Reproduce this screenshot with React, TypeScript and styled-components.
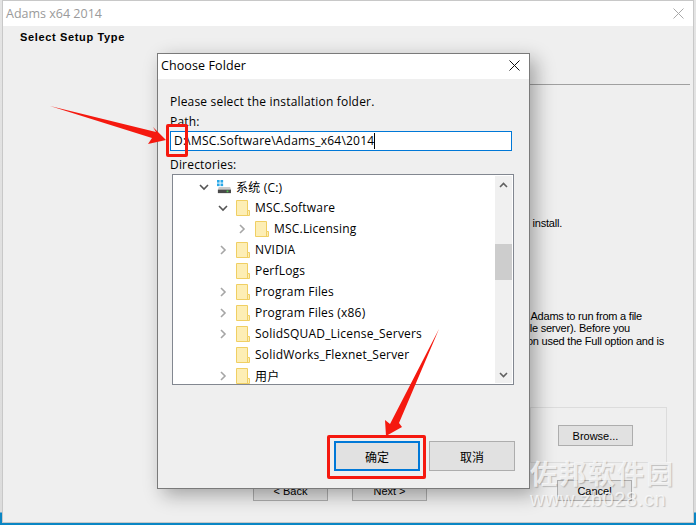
import React from "react";
import styled, { createGlobalStyle } from "styled-components";

const Global = createGlobalStyle`
  html, body { margin: 0; padding: 0; background: #fff; overflow: hidden; }
  #root { width: 696px; height: 525px; }
`;

const UI = `"Open Sans", "Noto Sans CJK SC", sans-serif`;
const Old = `"Liberation Sans", sans-serif`;

const Desktop = styled.div`
  position: relative;
  width: 696px;
  height: 525px;
  box-sizing: border-box;
  padding: 1px 3px 3px 3px;
  background: linear-gradient(#e4e4e4 0, #dcdcdc 512px, #0a86c4 513px);
  overflow: hidden;
`;
const Installer = styled.div`
  height: 521px;
  box-sizing: border-box;
  background: #efefef;
  display: flex;
  flex-direction: column;
  box-shadow: 0 0 0 1px #c8c8c8;
`;
const InstallerTitle = styled.div`
  height: 25px;
  flex: none;
  background: #fff;
  display: flex;
  align-items: center;
  justify-content: space-between;
  padding: 0 9px 0 3px;
  font: 12.5px ${UI};
  color: #9a9a9a;
`;
const Head = styled.div`
  height: 59px;
  flex: none;
  box-sizing: border-box;
  padding: 5px 0 0 17px;
  font: bold 11px ${Old};
  letter-spacing: 0.65px;
  color: #000;
  display: flex;
  flex-direction: column;
  justify-content: space-between;
`;
const HeadRule = styled.div`
  height: 1px;
  background: #a0a0a0;
  margin: 0 3px 0 500px;
`;
const Body = styled.div`
  flex: 1;
  position: relative;
  display: flex;
  flex-direction: column;
  font: 11px/12.5px ${Old};
  color: #000;
`;
const Copy = styled.div<{ $top: number }>`
  margin-top: ${(p) => p.$top}px;
  flex: none;
  letter-spacing: -0.22px;
`;
const CopyLine = styled.div<{ $end: number }>`
  width: ${(p) => p.$end}px;
  display: flex;
  justify-content: flex-end;
  white-space: nowrap;
`;
const GroupBox = styled.div`
  margin: 60px 0 0 527px;
  width: 137px;
  height: 56px;
  box-sizing: border-box;
  border: 1px solid #dcdcdc;
  padding: 17px 0 0 27px;
  flex: none;
`;
const OldButton = styled.button`
  width: 75px;
  height: 21px;
  box-sizing: border-box;
  border: 1px solid #adadad;
  background: #e1e1e1;
  padding: 0;
  font: 11px ${Old};
  color: #000;
`;
const Footer = styled.div`
  display: flex;
  margin: 17px 0 0 250px;
  gap: 24px;
  flex: none;
`;
const CancelSlot = styled.div`
  margin-left: 106px;
`;

const Dialog = styled.div`
  position: absolute;
  left: 157px;
  top: 53px;
  width: 373px;
  height: 436px;
  box-sizing: border-box;
  border: 1px solid #7a7a7a;
  background: #efefef;
  box-shadow: 6px 6px 18px rgba(0, 0, 0, 0.32);
  display: flex;
  flex-direction: column;
  font: 12px ${UI};
  color: #000;
`;
const DialogTitle = styled.div`
  height: 25px;
  flex: none;
  background: #fff;
  display: flex;
  align-items: center;
  justify-content: space-between;
  padding: 0 9px 2px 3px;
  box-sizing: border-box;
  font-size: 12.5px;
  letter-spacing: 0.1px;
`;
const DialogBody = styled.div`
  flex: 1;
  display: flex;
  flex-direction: column;
  padding: 14px 18px 0 12px;
`;
const Label = styled.div<{ $top?: number }>`
  height: 17px;
  line-height: 17px;
  margin-top: ${(p) => p.$top ?? 0}px;
  letter-spacing: 0.19px;
  white-space: nowrap;
`;
const PathInput = styled.div`
  height: 20px;
  width: 342px;
  margin-top: 1px;
  box-sizing: border-box;
  border: 1px solid #0078d7;
  background: #fff;
  padding-left: 3px;
  display: flex;
  align-items: center;
  line-height: 18px;
  letter-spacing: 0.21px;
  white-space: nowrap;
`;
const Caret = styled.span`
  width: 1px;
  height: 16px;
  background: #000;
`;
const Tree = styled.div`
  margin: 1px 0 0 2px;
  width: 342px;
  height: 211px;
  box-sizing: border-box;
  border: 1px solid #828790;
  background: #fff;
  display: flex;
  overflow: hidden;
`;
const TreeList = styled.div`
  flex: 1;
  padding-top: 1px;
  overflow: hidden;
`;
const Row = styled.div<{ $depth: number }>`
  height: 21px;
  display: flex;
  align-items: center;
  padding-left: ${(p) => 24 + p.$depth * 19}px;
  letter-spacing: 0.2px;
  white-space: nowrap;
`;
const Twisty = styled.span`
  width: 14px;
  height: 14px;
  flex: none;
  margin-right: 6px;
  display: flex;
  align-items: center;
  justify-content: center;
`;
const IconSlot = styled.span`
  width: 14px;
  height: 16px;
  flex: none;
  margin-right: 5px;
  display: flex;
`;
const Scrollbar = styled.div`
  width: 17px;
  flex: none;
  background: #f0f0f0;
  display: flex;
  flex-direction: column;
  margin: 1px 1px 1px 0;
  align-items: stretch;
`;
const ScrollCap = styled.div`
  height: 17px;
  display: flex;
  align-items: center;
  justify-content: center;
  flex: none;
`;
const ScrollTrack = styled.div`
  flex: 1;
  padding-top: 51px;
`;
const Thumb = styled.div`
  height: 36px;
  background: #cdcdcd;
`;
const DialogFooter = styled.div`
  display: flex;
  justify-content: flex-end;
  gap: 9px;
  margin: 56px -4px 0 0;
`;
const DialogButton = styled.button<{ $primary?: boolean }>`
  width: 86px;
  height: 30px;
  box-sizing: border-box;
  border: ${(p) => (p.$primary ? "2px solid #0078d7" : "1px solid #adadad")};
  background: #e1e1e1;
  padding: 0;
  font: 12px "Noto Sans CJK SC", sans-serif;
  color: #000;
`;
const RedFrame = styled.div<{ $x: number; $y: number; $w: number; $h: number }>`
  position: absolute;
  left: ${(p) => p.$x}px;
  top: ${(p) => p.$y}px;
  width: ${(p) => p.$w}px;
  height: ${(p) => p.$h}px;
  box-sizing: border-box;
  border: 3px solid #f5190f;
  border-radius: 2px;
`;
const ArrowLayer = styled.svg`
  position: absolute;
  left: 0;
  top: 0;
  width: 696px;
  height: 525px;
  pointer-events: none;
`;
const Watermark = styled.div`
  position: absolute;
  left: 530px;
  top: 458px;
  width: 146px;
  color: rgba(250, 250, 250, 0.8);
  text-shadow: 1px 1px 1px rgba(0, 0, 0, 0.2);
  pointer-events: none;
`;
const WatermarkCn = styled.div`
  font: 700 27px/30px "Noto Sans CJK SC", sans-serif;
  letter-spacing: 2px;
  white-space: nowrap;
`;
const WatermarkEn = styled.div`
  font: 20px/20px ${Old};
  letter-spacing: 0.6px;
  white-space: nowrap;
  margin-top: 1px;
`;

const CloseIcon = ({ color }: { color: string }) => (
  <svg width="11" height="11" viewBox="0 0 11 11">
    <path d="M0.5 0.5L10.5 10.5M10.5 0.5L0.5 10.5" stroke={color} strokeWidth="1" fill="none" />
  </svg>
);
const Folder = () => (
  <svg width="14" height="16" viewBox="0 0 14 16">
    <path d="M0.5 0.5H11.5V10.5H13.5V15.5H0.5Z" fill="#fdeeb5" stroke="#f0cf63" />
    <path d="M11.5 10.5V15" stroke="#f0cf63" />
  </svg>
);
const Drive = () => (
  <svg width="16" height="16" viewBox="0 0 16 16">
    <rect x="0" y="0" width="3" height="3" fill="#29a8e8" />
    <rect x="4" y="0" width="3" height="3" fill="#29a8e8" />
    <rect x="0" y="4" width="3" height="3" fill="#29a8e8" />
    <rect x="4" y="4" width="3" height="3" fill="#29a8e8" />
    <path d="M2 8H15L16 11H1Z" fill="#c9c9c9" />
    <rect x="1" y="11" width="15" height="4" fill="#4a4a4a" />
    <rect x="11" y="12" width="2" height="2" fill="#4ec94e" />
  </svg>
);
const Chevron = ({ open }: { open?: boolean }) => (
  <svg width="10" height="10" viewBox="0 0 10 10">
    <path
      d={open ? "M1 3L5 7L9 3" : "M3 1L7 5L3 9"}
      stroke={open ? "#555" : "#a6a6a6"}
      strokeWidth="1.6"
      fill="none"
    />
  </svg>
);

type Item = { name: string; depth: number; state?: "open" | "closed"; drive?: boolean };
const items: Item[] = [
  { name: "系统 (C:)", depth: 0, state: "open", drive: true },
  { name: "MSC.Software", depth: 1, state: "open" },
  { name: "MSC.Licensing", depth: 2, state: "closed" },
  { name: "NVIDIA", depth: 1, state: "closed" },
  { name: "PerfLogs", depth: 1 },
  { name: "Program Files", depth: 1, state: "closed" },
  { name: "Program Files (x86)", depth: 1, state: "closed" },
  { name: "SolidSQUAD_License_Servers", depth: 1, state: "closed" },
  { name: "SolidWorks_Flexnet_Server", depth: 1 },
  { name: "用户", depth: 1, state: "closed" },
];

export default function App() {
  return (
    <Desktop>
      <Global />
      <Installer>
        <InstallerTitle>
          <span>Adams x64 2014</span>
          <CloseIcon color="#a8a8a8" />
        </InstallerTitle>
        <Head>
          <span>Select Setup Type</span>
          <HeadRule />
        </Head>
        <Body>
          <Copy $top={132}>
            <CopyLine $end={559}>Select the type of setup you prefer to install.</CopyLine>
          </Copy>
          <Copy $top={80}>
            <CopyLine $end={639}>The Run From Network option allows Adams to run from a file</CopyLine>
            <CopyLine $end={627}>server (without being installed on the file server). Before you</CopyLine>
            <CopyLine $end={661}>use this, an administrator on this station used the Full option and is</CopyLine>
          </Copy>
          <GroupBox>
            <OldButton>Browse...</OldButton>
          </GroupBox>
          <Footer>
            <OldButton>&lt; Back</OldButton>
            <OldButton>Next &gt;</OldButton>
            <CancelSlot>
              <OldButton>Cancel</OldButton>
            </CancelSlot>
          </Footer>
        </Body>
      </Installer>

      <Dialog>
        <DialogTitle>
          <span>Choose Folder</span>
          <CloseIcon color="#111" />
        </DialogTitle>
        <DialogBody>
          <Label>Please select the installation folder.</Label>
          <Label $top={3}>Path:</Label>
          <PathInput>
            D:\MSC.Software\Adams_x64\2014
            <Caret />
          </PathInput>
          <Label $top={5}>Directories:</Label>
          <Tree>
            <TreeList>
              {items.map((it) => (
                <Row key={it.name} $depth={it.depth}>
                  <Twisty>{it.state && <Chevron open={it.state === "open"} />}</Twisty>
                  <IconSlot>{it.drive ? <Drive /> : <Folder />}</IconSlot>
                  {it.name}
                </Row>
              ))}
            </TreeList>
            <Scrollbar>
              <ScrollCap>
                <svg width="9" height="6" viewBox="0 0 9 6">
                  <path d="M1 5L4.5 1.5L8 5" stroke="#606060" strokeWidth="1.6" fill="none" />
                </svg>
              </ScrollCap>
              <ScrollTrack>
                <Thumb />
              </ScrollTrack>
              <ScrollCap>
                <svg width="9" height="6" viewBox="0 0 9 6">
                  <path d="M1 1L4.5 4.5L8 1" stroke="#606060" strokeWidth="1.6" fill="none" />
                </svg>
              </ScrollCap>
            </Scrollbar>
          </Tree>
          <DialogFooter>
            <DialogButton $primary>确定</DialogButton>
            <DialogButton>取消</DialogButton>
          </DialogFooter>
        </DialogBody>
      </Dialog>

      <ArrowLayer viewBox="0 0 696 525">
        <path d="M50 106L156 132L153 127L166 140L148 144L152 138Z" fill="#f5190f" />
        <path d="M439 329L399 423L402 427L386 436L385 420L390 424Z" fill="#f5190f" />
      </ArrowLayer>
      <RedFrame $x={166} $y={124} $w={22} $h={33} />
      <RedFrame $x={327} $y={435} $w={99} $h={44} />
      <Watermark>
        <WatermarkCn>佐邦软件园</WatermarkCn>
        <WatermarkEn>www.zb028.cn</WatermarkEn>
      </Watermark>
    </Desktop>
  );
}
